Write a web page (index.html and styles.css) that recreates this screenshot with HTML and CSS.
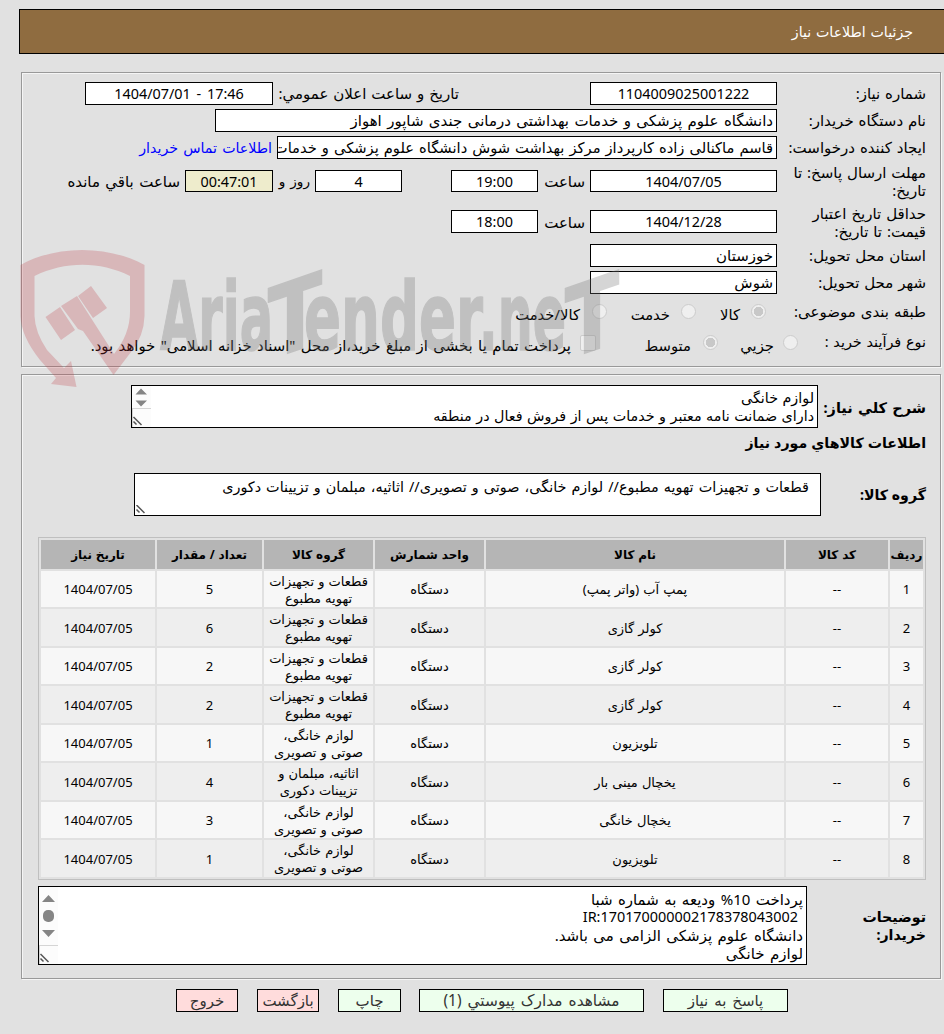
FILE: index.html
```html
<!DOCTYPE html>
<html lang="fa" dir="rtl">
<head>
    <meta charset="UTF-8">
    <title>جزئیات اطلاعات نیاز</title>
    <link rel="stylesheet" href="styles.css">
</head>
<body>
    <div class="header">جزئیات اطلاعات نیاز</div>

    <div class="panel info">
        <div class="row">
            <div class="label">شماره نیاز:</div>
            <div class="field code">1104009025001222</div>
            <div class="label announce">تاریخ و ساعت اعلان عمومي:</div>
            <div class="field code date" dir="ltr">1404/07/01 - 17:46</div>
        </div>
        <div class="row">
            <div class="label">نام دستگاه خریدار:</div>
            <div class="field org">دانشگاه علوم پزشکی و خدمات بهداشتی درمانی جندی شاپور اهواز</div>
        </div>
        <div class="row">
            <div class="label">ایجاد کننده درخواست:</div>
            <div class="field creator">قاسم ماکنالی زاده کارپرداز مرکز بهداشت شوش دانشگاه علوم پزشکی و خدمات بهداشتی</div>
            <a class="contact">اطلاعات تماس خریدار</a>
        </div>
        <div class="row tall">
            <div class="label">مهلت ارسال پاسخ: تا<br>تاریخ:</div>
            <div class="field code">1404/07/05</div>
            <div class="hour">ساعت</div>
            <div class="field small">19:00</div>
            <div class="field small days">4</div>
            <div class="and">روز و</div>
            <div class="field small timer">00:47:01</div>
            <div class="remain">ساعت باقي مانده</div>
        </div>
        <div class="row taller">
            <div class="label">حداقل تاریخ اعتبار<br>قیمت: تا تاریخ:</div>
            <div class="field code">1404/12/28</div>
            <div class="hour">ساعت</div>
            <div class="field small">18:00</div>
        </div>
        <div class="row">
            <div class="label">استان محل تحویل:</div>
            <div class="field place">خوزستان</div>
        </div>
        <div class="row">
            <div class="label">شهر محل تحویل:</div>
            <div class="field place">شوش</div>
        </div>
        <div class="row options">
            <div class="label">طبقه بندی موضوعی:</div>
            <span class="radio checked first-a"></span><span class="opt goods">کالا</span>
            <span class="radio"></span><span class="opt service">خدمت</span>
            <span class="radio"></span><span class="opt both">کالا/خدمت</span>
        </div>
        <div class="row options">
            <div class="label process">نوع فرآیند خرید :</div>
            <span class="radio first-b"></span><span class="opt minor">جزیي</span>
            <span class="radio checked"></span><span class="opt medium">متوسط</span>
            <span class="checkbox"></span><span class="opt treasury">پرداخت تمام یا بخشی از مبلغ خرید،از محل "اسناد خزانه اسلامی" خواهد بود.</span>
        </div>
    </div>

    <div class="panel details">
        <div class="detail-row">
            <div class="title">شرح کلي نیاز:</div>
            <div class="area summary">
                <p>لوازم خانگی</p>
                <p>دارای ضمانت نامه معتبر و خدمات پس از فروش فعال در منطقه</p>
                <div class="scroll">
                    <svg width="19" height="41" viewBox="0 0 19 41">
                        <path d="M0 22.5H19M.5 22V41" stroke="#d5d5d5"/>
                        <path d="M3.5 8.5 9 2.5l6 6zM3.5 14.5H15l-6 6z" fill="#858585"/>
                        <path d="M1.5 31l8 8M1.5 35.5l3 3" stroke="#555" stroke-width="1.5"/>
                    </svg>
                </div>
            </div>
        </div>
        <h3 class="section-title">اطلاعات کالاهاي مورد نیاز</h3>
        <div class="detail-row group-row">
            <div class="title">گروه کالا:</div>
            <div class="area group">
                <p>قطعات و تجهیزات تهویه مطبوع// لوازم خانگی، صوتی و تصویری// اثاثیه، مبلمان و تزیینات دکوری</p>
                <svg class="grip" width="10" height="10" viewBox="0 0 10 10"><path d="M1.5 0l8 8M1.5 4.5l3 3" stroke="#555" stroke-width="1.5"/></svg>
            </div>
        </div>

        <table class="items">
            <colgroup>
                <col class="c-row"><col class="c-code"><col class="c-name"><col class="c-unit"><col class="c-group"><col class="c-count"><col class="c-date">
            </colgroup>
            <tr><th>ردیف</th><th>کد کالا</th><th>نام کالا</th><th>واحد شمارش</th><th>گروه کالا</th><th>تعداد / مقدار</th><th>تاریخ نیاز</th></tr>
            <tr><td>1</td><td>--</td><td>پمپ آب (واتر پمپ)</td><td>دستگاه</td><td>قطعات و تجهیزات<br>تهویه مطبوع</td><td>5</td><td>1404/07/05</td></tr>
            <tr><td>2</td><td>--</td><td>کولر گازی</td><td>دستگاه</td><td>قطعات و تجهیزات<br>تهویه مطبوع</td><td>6</td><td>1404/07/05</td></tr>
            <tr><td>3</td><td>--</td><td>کولر گازی</td><td>دستگاه</td><td>قطعات و تجهیزات<br>تهویه مطبوع</td><td>2</td><td>1404/07/05</td></tr>
            <tr><td>4</td><td>--</td><td>کولر گازی</td><td>دستگاه</td><td>قطعات و تجهیزات<br>تهویه مطبوع</td><td>2</td><td>1404/07/05</td></tr>
            <tr><td>5</td><td>--</td><td>تلویزیون</td><td>دستگاه</td><td>لوازم خانگی،<br>صوتی و تصویری</td><td>1</td><td>1404/07/05</td></tr>
            <tr><td>6</td><td>--</td><td>یخچال مینی بار</td><td>دستگاه</td><td>اثاثیه، مبلمان و<br>تزیینات دکوری</td><td>4</td><td>1404/07/05</td></tr>
            <tr><td>7</td><td>--</td><td>یخچال خانگی</td><td>دستگاه</td><td>لوازم خانگی،<br>صوتی و تصویری</td><td>3</td><td>1404/07/05</td></tr>
            <tr><td>8</td><td>--</td><td>تلویزیون</td><td>دستگاه</td><td>لوازم خانگی،<br>صوتی و تصویری</td><td>1</td><td>1404/07/05</td></tr>
        </table>

        <div class="detail-row notes-row">
            <div class="title">توضیحات<br>خریدار:</div>
            <div class="area notes">
                <p>پرداخت 10% ودیعه به شماره شبا</p>
                <p class="iban"><bdo dir="ltr">IR:170170000002178378043002</bdo></p>
                <p>دانشگاه علوم پزشکی الزامی می باشد.</p>
                <p>لوازم خانگی</p>
                <div class="scroll">
                    <svg width="19" height="77" viewBox="0 0 19 77">
                        <path d="M0 58.5H19M.5 58V77" stroke="#d5d5d5"/>
                        <path d="M3 15l6.5-7 6.5 7zM3 43h13l-6.5 7z" fill="#858585"/>
                        <rect x="4" y="23" width="11" height="12" rx="5" fill="#858585"/>
                        <path d="M1.5 67l8 8M1.5 71.5l3 3" stroke="#555" stroke-width="1.5"/>
                    </svg>
                </div>
            </div>
        </div>
    </div>

    <div class="buttons">
        <button class="btn green reply">پاسخ به نیاز</button>
        <button class="btn green docs">مشاهده مدارک پیوستي (1)</button>
        <button class="btn green print">چاپ</button>
        <button class="btn red">بازگشت</button>
        <button class="btn red">خروج</button>
    </div>

    <svg class="watermark" width="604" height="142" viewBox="18 248 604 142" direction="ltr">
        <g class="shield">
            <path fill-rule="evenodd" d="M20.5 265C56 245 108 245 144.500 265V316Q144 336 131 352L113.500 375 83 331 78 329 61 306 77 296 91 318 114 354Q130 334 130 312V276C100 261 65 261 34.500 276V316Q35 332 47 350L64 368 71 361 76.500 387 51 384 56 378 40 360Q21 336 20.500 316Z"/>
            <path d="M45.500 317L60 307 75 330 61 340zM78 296L91 286 107 308 93 318z"/>
        </g>
        <g class="brand">
            <text x="160" y="350" textLength="113" lengthAdjust="spacingAndGlyphs">Aria</text>
            <text class="tee" transform="translate(268 360) skewY(-19)" textLength="54" lengthAdjust="spacingAndGlyphs">T</text>
            <text x="304" y="350" textLength="179" lengthAdjust="spacingAndGlyphs">ender</text>
            <text x="479" y="350" textLength="87" lengthAdjust="spacingAndGlyphs">.ne</text>
            <text class="tee" transform="translate(565 360) skewY(-19)" textLength="54" lengthAdjust="spacingAndGlyphs">T</text>
        </g>
    </svg>
</body>
</html>
```
FILE: styles.css
```css
body {
    position: relative;
    margin: 0;
    padding: 9px 0 0;
    height: 1025px;
    overflow: hidden;
    background-color: #e1e1e1;
    color: #000;
    font-family: "Noto Sans", "DejaVu Sans", sans-serif;
    font-size: 15px;
    line-height: 18px;
    word-spacing: 1.5px;
}
.header {
    box-sizing: border-box;
    height: 45px;
    margin: 0 0 18px;
    margin-left: 19px;
    padding-right: 31px;
    border: 1px solid #000;
    border-right: none;
    background-color: #8f6c40;
    color: #fff;
    font-size: 14.2px;
    line-height: 44px;
    word-spacing: 1px;
}
.panel {
    box-sizing: border-box;
    width: 920px;
    margin-right: 3px;
    border: 1px solid #999;
    box-shadow: 1px 1px 0 #f5f5f5, inset 1px 1px 0 #f5f5f5;
    padding-right: 14px;
}
.info {
    height: 295px;
    padding-top: 7px;
}
.row {
    display: flex;
    align-items: center;
    height: 27px;
    white-space: nowrap;
}
.tall {
    height: 40px;
}
.taller {
    height: 41px;
}
.options {
    height: 31px;
}
.label {
    flex: none;
    width: 149px;
    margin-bottom: 2px;
    word-spacing: 1px;
}
.tall .label,
.taller .label {
    margin-bottom: 0;
}
.field {
    flex: none;
    box-sizing: border-box;
    height: 23px;
    padding: 0 3px;
    border: 1px solid #000;
    background-color: #fff;
    line-height: 20px;
    overflow: hidden;
}
.code {
    width: 187px;
    font-size: 14.4px;
    line-height: 22px;
    text-align: center;
}
.announce {
    width: 186px;
    margin-right: 131px;
}
.date {
    width: 188px;
    word-spacing: 2px;
}
.org {
    width: 562px;
}
.creator {
    width: 500px;
    font-size: 14.7px;
    word-spacing: 1.2px;
}
.place {
    width: 187px;
}
.small {
    width: 87px;
    font-size: 14.4px;
    line-height: 22px;
    text-align: center;
}
.tall .field {
    height: 22px;
}
.contact {
    margin-right: 5px;
    color: #00f;
    font-size: 14.2px;
}
.hour {
    box-sizing: border-box;
    width: 52px;
    padding-right: 5px;
}
.days {
    margin-right: 49px;
}
.and {
    width: 37px;
    padding-right: 5px;
    font-size: 13.6px;
}
.timer {
    width: 88px;
    background-color: #eeeccc;
}
.remain {
    padding-right: 5px;
}
.radio {
    flex: none;
    box-sizing: border-box;
    width: 15px;
    height: 15px;
    border: 1px solid #ccc;
    border-radius: 50%;
    background-color: #efefef;
}
.checked {
    background: radial-gradient(circle, #c8c8c8 0 4.5px, #efefef 5px);
}
.checkbox {
    flex: none;
    box-sizing: border-box;
    width: 16px;
    height: 16px;
    border: 1px solid #ccc;
    border-radius: 2px;
    background-color: #efefef;
}
.opt {
    flex: none;
    padding-top: 4px;
    font-size: 14.8px;
}
.process {
    font-size: 14.4px;
}
.first-a {
    margin-right: 11px;
}
.goods {
    width: 44px;
    padding-right: 11px;
}
.service {
    width: 63px;
    padding-right: 11px;
}
.both {
    padding-right: 12px;
}
.first-b {
    margin-right: -21px;
}
.minor {
    width: 56px;
    padding-right: 9px;
}
.medium {
    width: 95px;
    padding-right: 12px;
}
.treasury {
    padding-right: 9px;
    font-size: 14.9px;
}
.details {
    height: 605px;
    margin-top: 7px;
    padding-top: 10px;
}
.detail-row {
    display: flex;
    align-items: center;
}
.title {
    flex: none;
    width: 108px;
    font-size: 14.5px;
    font-weight: bold;
}
.area {
    position: relative;
    box-sizing: border-box;
    width: 687px;
    height: 43px;
    padding: 3px 3px 0;
    border: 1px solid #000;
    background-color: #fff;
    white-space: nowrap;
    overflow: hidden;
}
.area p {
    margin: 0;
    height: 18px;
}
.summary {
    font-size: 14.3px;
    word-spacing: 0.8px;
}
.scroll {
    position: absolute;
    top: 0;
    left: 0;
    width: 19px;
    height: 100%;
    background-color: #fcfcfc;
}
.scroll svg {
    display: block;
}
.grip {
    position: absolute;
    left: 0;
    bottom: 0;
}
.section-title {
    margin: 6px 0 0;
    height: 39px;
    font-size: 14.2px;
    word-spacing: 0.4px;
}
.group-row .title {
    width: 105px;
    font-size: 14.2px;
    word-spacing: 0;
}
.group {
    padding: 4px 11px 0;
    font-size: 14.4px;
    word-spacing: 1.3px;
}
.items {
    table-layout: fixed;
    width: 888px;
    height: 343px;
    margin-top: 21px;
    border: 1px solid #bfbfbf;
    border-spacing: 2px;
    font-size: 13px;
    line-height: 17px;
    text-align: center;
    word-spacing: 0.7px;
}
.items th,
.items td {
    padding: 0;
    white-space: nowrap;
}
.items th {
    height: 29px;
    background-color: #b5b5b5;
    font-size: 12px;
}
.items td {
    height: 35px;
    padding-top: 1px;
    background-color: #f7f7f7;
}
.items tr:nth-child(odd) td {
    height: 36px;
    background-color: #eee;
}
.c-row {
    width: 33px;
}
.c-code {
    width: 102px;
}
.c-name {
    width: 298px;
}
.c-unit,
.c-group {
    width: 109px;
}
.c-count {
    width: 105px;
}
.c-date {
    width: 114px;
}
.notes-row {
    margin-top: 6px;
}
.notes-row .title {
    width: 119px;
    font-size: 14.2px;
}
.notes {
    width: 769px;
    height: 79px;
    padding-top: 3px;
}
.notes .iban {
    padding-right: 5px;
    font-size: 14.4px;
}
.buttons {
    display: flex;
    gap: 19px;
    margin: 10px 156px 0 0;
}
.btn {
    box-sizing: border-box;
    width: 62px;
    height: 23px;
    padding: 0 0 2px;
    border: 1px solid #000;
    font: inherit;
    color: #333;
    white-space: nowrap;
    word-spacing: 2px;
}
.green {
    background-color: #edffed;
}
.red {
    background-color: #ffdcdc;
}
.reply {
    width: 125px;
}
.docs {
    width: 225px;
    margin-left: -1px;
    padding: 0;
    font-size: 15.4px;
}
.print {
    width: 63px;
}
.watermark {
    position: absolute;
    top: 248px;
    left: 18px;
    pointer-events: none;
}
.shield {
    fill: #be3c46;
    opacity: 0.25;
}
.brand {
    fill: #777;
    stroke: #777;
    stroke-width: 1.5px;
    opacity: 0.3;
    font-family: "DejaVu Sans Condensed", "DejaVu Sans", sans-serif;
    font-weight: bold;
    font-size: 94px;
}
.brand .tee {
    font-size: 98px;
}
```
